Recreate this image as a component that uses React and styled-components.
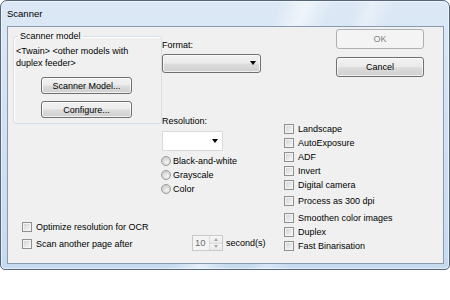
import React from 'react';
import styled, { createGlobalStyle } from 'styled-components';

const GlobalStyle = createGlobalStyle`
  html, body {
    margin: 0;
    background: #fff;
  }
  body {
    font-family: "Liberation Sans", Arial, sans-serif;
    font-size: 9px;
    color: #000;
  }
`;

const Window = styled.div`
  position: relative;
  width: 450px;
  height: 270px;
  box-sizing: border-box;
  display: flex;
  flex-direction: column;
  padding: 0 5px 5px 6px;
  border: 1px solid #55657a;
  border-radius: 7px 7px 5px 5px;
  box-shadow: inset 0 0 0 1px rgba(255, 255, 255, 0.55);
  background:
    linear-gradient(112deg, transparent 50%, rgba(255, 255, 255, 0.55) 55%, transparent 60%, transparent 64%, rgba(255, 255, 255, 0.35) 67%, transparent 71%),
    linear-gradient(180deg, #dce8f5 0%, #d3e2f3 40%, #c6daf0 100%);
`;

const TitleBar = styled.div`
  height: 25px;
  display: flex;
  align-items: center;
  flex-shrink: 0;
`;

const Title = styled.span`
  font-size: 9.5px;
  color: #000;
`;

const Client = styled.div`
  flex: 1;
  display: flex;
  border: 1px solid #8a9bb0;
  background: #f0f0f0;
`;

const Column = styled.div`
  display: flex;
  flex-direction: column;
  flex-shrink: 0;
  box-sizing: border-box;
`;

const LeftColumn = styled(Column)`
  width: 149px;
  margin-left: 5px;
  padding: 4px 0 11px;
`;

const MiddleColumn = styled(Column)`
  width: 122px;
  padding: 12.5px 0 12px;
`;

const RightColumn = styled(Column)`
  flex: 1;
  padding-top: 2px;
`;

const GroupBox = styled.fieldset`
  margin: 0;
  min-width: 0;
  padding: 4px 2px 5px;
  border: 1px solid #d5dfe5;
  border-radius: 3px;
  box-shadow: inset 1px 1px 0 #fff;
  display: flex;
  flex-direction: column;
`;

const Legend = styled.legend`
  padding: 0 2px;
  margin-left: 2px;
  line-height: 10px;
`;

const ModelText = styled.div`
  line-height: 12px;
`;

const PushButton = styled.button`
  box-sizing: border-box;
  width: ${p => p.$w}px;
  height: ${p => p.$h}px;
  margin: ${p => p.$mt || 0}px 0 0 ${p => p.$ml || 0}px;
  padding: 0;
  font-family: inherit;
  font-size: 9px;
  border-radius: 3px;
  border: 1px solid ${p => (p.disabled ? '#adb2b5' : '#707070')};
  color: ${p => (p.disabled ? '#838383' : '#000')};
  background: ${p =>
    p.disabled
      ? '#f4f4f4'
      : 'linear-gradient(180deg, #f2f2f2 0%, #ebebeb 48%, #dddddd 52%, #cfcfcf 100%)'};
  box-shadow: inset 0 0 0 1px ${p => (p.disabled ? '#f4f4f4' : 'rgba(255,255,255,0.7)')};
`;

const Label = styled.div`
  line-height: 11px;
  margin-top: ${p => p.$mt || 0}px;
`;

const Combo = styled.div`
  box-sizing: border-box;
  width: ${p => p.$w}px;
  height: ${p => p.$h}px;
  margin-top: ${p => p.$mt || 0}px;
  display: flex;
  align-items: center;
  justify-content: flex-end;
  padding-right: 4px;
  border-radius: ${p => (p.$flat ? 1 : 3)}px;
  border: 1px solid ${p => (p.$flat ? '#d9d9d9' : '#707070')};
  background: ${p =>
    p.$flat
      ? '#fff'
      : 'linear-gradient(180deg, #f2f2f2 0%, #ebebeb 48%, #dddddd 52%, #cfcfcf 100%)'};
  box-shadow: ${p => (p.$flat ? 'none' : 'inset 0 0 0 1px rgba(255,255,255,0.7)')};
`;

const Arrow = styled.span`
  width: 0;
  height: 0;
  border-left: 3.5px solid transparent;
  border-right: 3.5px solid transparent;
  border-top: 4px solid #000;
`;

const RadioList = styled.div`
  margin-top: 2.5px;
  margin-left: -1px;
`;

const RadioRow = styled.label`
  height: 14px;
  display: flex;
  align-items: center;
  gap: 2px;
`;

const RadioCircle = styled.span`
  box-sizing: border-box;
  width: 10px;
  height: 10px;
  border-radius: 50%;
  border: 1px solid #9a9a9a;
  background: radial-gradient(circle at 60% 65%, #f6f6f6 0%, #dcdcdc 45%, #c4c4c4 100%);
`;

const CheckRow = styled.label`
  height: ${p => p.$h || 14}px;
  margin: ${p => p.$mt || 0}px 0 0 ${p => p.$ml || 0}px;
  display: flex;
  align-items: center;
  gap: 4px;
  flex-shrink: 0;
`;

const CheckBox = styled.span`
  box-sizing: border-box;
  width: 10px;
  height: 10px;
  flex-shrink: 0;
  border: 1px solid #8e8f8f;
  background: linear-gradient(135deg, #cdd0d4 0%, #e9e9e9 60%, #f8f8f8 100%);
  box-shadow: inset 0 0 0 1px #f4f4f4;
`;

const BottomChecks = styled.div`
  margin-top: auto;
`;

const SpinnerRow = styled.div`
  margin: auto 0 0 30px;
  display: flex;
  align-items: center;
  gap: 3px;
`;

const SpinBox = styled.div`
  box-sizing: border-box;
  width: 31px;
  height: 16px;
  display: flex;
  border: 1px solid #c9c9c9;
  background: #f4f4f4;
`;

const SpinValue = styled.span`
  flex: 1;
  padding-left: 2px;
  line-height: 14px;
  color: #6d6d6d;
  font-size: 9.5px;
`;

const SpinButtons = styled.div`
  width: 12px;
  display: flex;
  flex-direction: column;
  border-left: 1px solid #d9d9d9;
`;

const SpinBtn = styled.div`
  flex: 1;
  display: flex;
  align-items: center;
  justify-content: center;
  background: linear-gradient(180deg, #f7f7f7, #e9e9e9);
  & + & {
    border-top: 1px solid #d9d9d9;
  }
`;

const SpinArrow = styled.span`
  width: 0;
  height: 0;
  border-left: 2.5px solid transparent;
  border-right: 2.5px solid transparent;
  ${p => (p.$up ? 'border-bottom: 3px solid #a8a8a8;' : 'border-top: 3px solid #a8a8a8;')}
`;

const rightChecks = [
  { label: 'Landscape', mt: 44.5 },
  { label: 'AutoExposure' },
  { label: 'ADF' },
  { label: 'Invert' },
  { label: 'Digital camera' },
  { label: 'Process as 300 dpi', mt: 2 },
  { label: 'Smoothen color images', mt: 3 },
  { label: 'Duplex' },
  { label: 'Fast Binarisation' },
];

export default function App() {
  return (
    <>
      <GlobalStyle />
      <Window>
        <TitleBar>
          <Title>Scanner</Title>
        </TitleBar>
        <Client>
          <LeftColumn>
            <GroupBox>
              <Legend>Scanner model</Legend>
              <ModelText>
                &lt;Twain&gt; &lt;other models with
                <br />
                duplex feeder&gt;
              </ModelText>
              <PushButton $w={91} $h={17} $mt={8} $ml={25}>Scanner Model...</PushButton>
              <PushButton $w={91} $h={17} $mt={7} $ml={25}>Configure...</PushButton>
            </GroupBox>
            <BottomChecks>
              <CheckRow $h={17} $ml={9}><CheckBox />Optimize resolution for OCR</CheckRow>
              <CheckRow $h={17} $ml={9}><CheckBox />Scan another page after</CheckRow>
            </BottomChecks>
          </LeftColumn>

          <MiddleColumn>
            <Label>Format:</Label>
            <Combo $w={99} $h={19} $mt={3}><Arrow /></Combo>
            <Label $mt={43.5}>Resolution:</Label>
            <Combo $w={61} $h={20} $mt={4} $flat><Arrow /></Combo>
            <RadioList>
              {['Black-and-white', 'Grayscale', 'Color'].map(r => (
                <RadioRow key={r}><RadioCircle />{r}</RadioRow>
              ))}
            </RadioList>
            <SpinnerRow>
              <SpinBox>
                <SpinValue>10</SpinValue>
                <SpinButtons>
                  <SpinBtn><SpinArrow $up /></SpinBtn>
                  <SpinBtn><SpinArrow /></SpinBtn>
                </SpinButtons>
              </SpinBox>
              second(s)
            </SpinnerRow>
          </MiddleColumn>

          <RightColumn>
            <PushButton $w={88} $h={20} $ml={52} disabled>OK</PushButton>
            <PushButton $w={88} $h={20} $ml={52} $mt={8}>Cancel</PushButton>
            {rightChecks.map(c => (
              <CheckRow key={c.label} $mt={c.mt}><CheckBox />{c.label}</CheckRow>
            ))}
          </RightColumn>
        </Client>
      </Window>
    </>
  );
}
